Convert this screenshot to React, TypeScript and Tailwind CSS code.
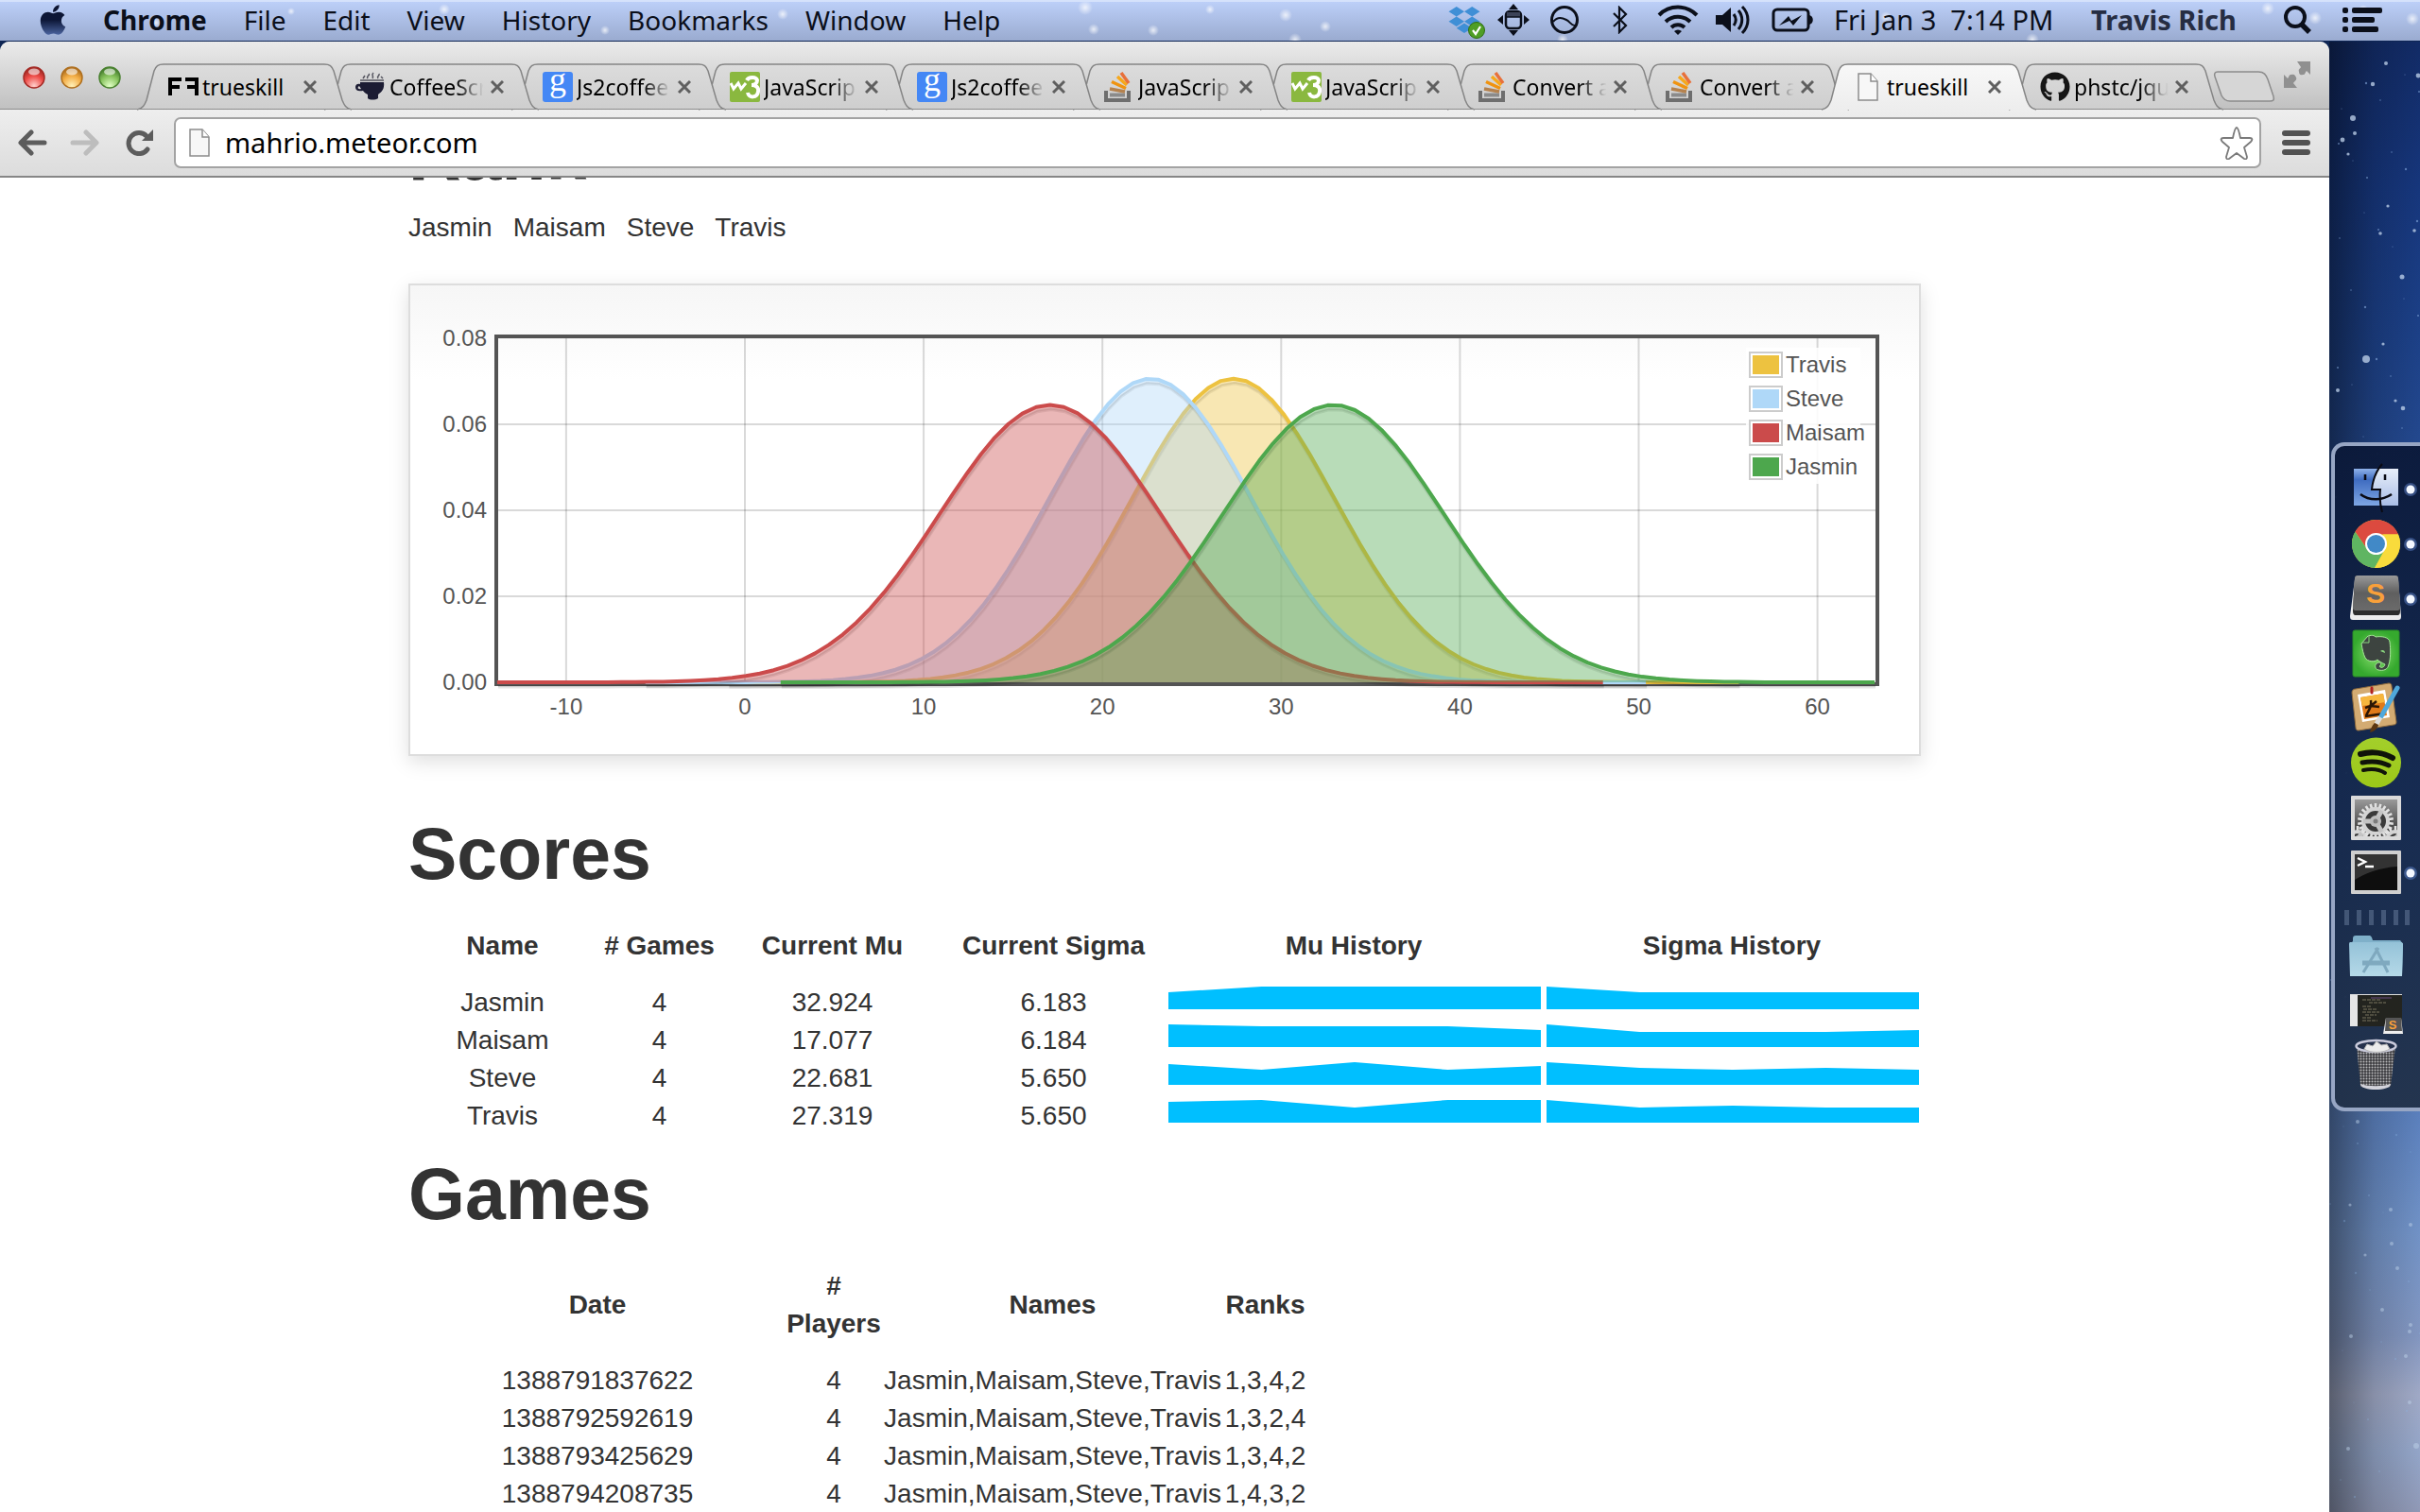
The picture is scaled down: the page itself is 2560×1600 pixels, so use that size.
import React from "react";
import { FaApple, FaDropbox, FaGithub } from "react-icons/fa";

/* ---------- Menu bar ---------- */

const MENUS = ["File", "Edit", "View", "History", "Bookmarks", "Window", "Help"];

const GLINTS = [
  [165, 22, 5], [308, 10, 4], [470, 8, 6], [640, 30, 5], [745, 18, 5], [828, 13, 6], [1148, 6, 8], [1280, 8, 5],
  [1157, 29, 6], [1220, 30, 6], [1360, 14, 7], [1402, 26, 6], [1370, 40, 7], [1653, 40, 6], [1995, 16, 6],
  [2150, 40, 7], [2399, 7, 7], [2449, 17, 7], [2500, 8, 5], [2552, 18, 7],
];

function MenuBar() {
  return (
    <header className="relative z-10 flex h-[43px] shrink-0 items-center overflow-hidden border-t-2 border-[#d5e2fb] bg-linear-to-b from-[#bccff8] to-[#9aabd0] pr-10 pb-[3px] pl-10 text-[28px] leading-9 text-[#0b0f1a]">
      <svg className="absolute inset-0 h-full w-full" aria-hidden="true">
        <defs>
          <radialGradient id="glint">
            <stop offset="0" stopColor="#fff" stopOpacity="0.75" />
            <stop offset="1" stopColor="#fff" stopOpacity="0" />
          </radialGradient>
        </defs>
        {GLINTS.map(([x, y, r]) => (
          <circle key={x} cx={x} cy={y} r={r} fill="url(#glint)" />
        ))}
      </svg>
      <button aria-label="Apple menu" className="relative w-[69px] shrink-0">
        <svg width="0" height="0" className="absolute">
          <defs>
            <linearGradient id="appleFill" x1="0" y1="0" x2="0" y2="1">
              <stop offset="0" stopColor="#0c1430" />
              <stop offset="0.5" stopColor="#0c1636" />
              <stop offset="1" stopColor="#4a639e" />
            </linearGradient>
          </defs>
        </svg>
        <FaApple className="h-9 w-8" style={{ fill: "url(#appleFill)" }} />
      </button>
      <nav className="relative flex flex-1 gap-[39px] whitespace-nowrap">
        <button className="font-bold">Chrome</button>
        {MENUS.map((m) => (
          <button key={m}>{m}</button>
        ))}
      </nav>
      <div className="relative flex items-center whitespace-nowrap">
        <button aria-label="Dropbox" className="flex w-[52px] justify-center">
          <span className="relative">
            <FaDropbox className="h-8 w-9 text-[#3f8fd6]" />
            <svg className="absolute -right-1 -bottom-1" width="18" height="18" viewBox="0 0 18 18">
              <circle cx="9" cy="9" r="8.5" fill="#4f9e25" stroke="#2f6f12" />
              <path d="M5 9l3 4 5-8" fill="none" stroke="#fff" strokeWidth="2.2" />
            </svg>
          </span>
        </button>
        <button aria-label="Window manager" className="flex w-[51px] justify-center">
          <svg width="34" height="34" viewBox="0 0 34 34" fill="#0b0f1a">
            <path d="M17 0l5 6H12zM17 34l5-6H12zM0 17l6-5v10zM34 17l-6-5v10z" />
            <rect x="9" y="8" width="16" height="18" rx="4" fill="none" stroke="#0b0f1a" strokeWidth="2.5" />
            <path d="M10 9h14v5H10z" fill="#3b4257" />
            <path d="M9 14h16" stroke="#0b0f1a" strokeWidth="1.5" />
          </svg>
        </button>
        <button aria-label="Activity" className="flex w-[58px] justify-center">
          <svg width="32" height="32" viewBox="0 0 32 32" fill="none" stroke="#0b0f1a" strokeWidth="3">
            <circle cx="16" cy="16" r="13.5" />
            <path d="M4 18c5-6 10-4 14-2s5 6 9 6" strokeWidth="2" />
          </svg>
        </button>
        <button aria-label="Bluetooth" className="flex w-[60px] justify-center">
          <svg width="18" height="30" viewBox="0 0 18 30" fill="none" stroke="#0b0f1a" strokeWidth="2.2">
            <path d="M2 8l13 13-7 7V2l7 7L2 22" />
          </svg>
        </button>
        <button aria-label="Wi-Fi" className="flex w-[62px] justify-center">
          <svg width="44" height="32" viewBox="0 0 44 32" fill="none" stroke="#0b0f1a" strokeWidth="4">
            <path d="M2 11a28 28 0 0 1 40 0" />
            <path d="M9 18a19 19 0 0 1 26 0" />
            <path d="M15 24a10 10 0 0 1 14 0" />
            <path d="M22 32l-4-4a6 6 0 0 1 8 0z" fill="#0b0f1a" stroke="none" />
          </svg>
        </button>
        <button aria-label="Volume" className="flex w-[54px] justify-center">
          <svg width="36" height="32" viewBox="0 0 36 32" fill="none" stroke="#0b0f1a" strokeWidth="3">
            <path d="M0 11h7l9-8v26l-9-8H0z" fill="#0b0f1a" stroke="none" />
            <path d="M19 10c3 4 3 8 0 12M24 6c5 6 5 14 0 20M28 2c8 8 8 20 0 28" />
          </svg>
        </button>
        <button aria-label="Battery charging" className="flex w-[72px] justify-center">
          <svg width="44" height="28" viewBox="0 0 44 28">
            <rect x="2" y="3" width="37" height="22" rx="4" fill="none" stroke="#0b0f1a" strokeWidth="3" />
            <path d="M40 9c5 1 5 9 0 10z" fill="#0b0f1a" />
            <path d="M8 20l10-10 3 5 11-6-9 11-4-5z" fill="#0b0f1a" />
          </svg>
        </button>
        <button className="ml-2 w-[240px] text-left text-[29px] whitespace-pre">Fri Jan 3  7:14 PM</button>
        <button className="ml-8 w-[160px] text-left text-[29px] font-bold text-[#262d42]">Travis Rich</button>
        <button aria-label="Spotlight" className="ml-11">
          <svg width="30" height="30" viewBox="0 0 30 30" fill="none" stroke="#0b0f1a">
            <circle cx="12" cy="12" r="10" strokeWidth="4" />
            <path d="M19 20l8 8" strokeWidth="5.5" />
          </svg>
        </button>
        <button aria-label="Notification Center" className="ml-8">
          <svg width="42" height="26" viewBox="0 0 42 26" fill="#0b0f1a">
            {[0, 10, 20].map((y, i) => (
              <g key={y}>
                <rect x="0" y={y} width="6" height="6" rx="2" />
                <rect x="10" y={y} width={[32, 24, 28][i]} height="6" rx="2" />
              </g>
            ))}
          </svg>
        </button>
      </div>
    </header>
  );
}

/* ---------- Tab strip ---------- */

function PageIcon({ small = false }: { small?: boolean }) {
  return (
    <svg width={small ? 32 : 22} height="32" viewBox={small ? "0 0 32 32" : "5 0 22 32"} aria-hidden="true">
      <path d="M6 2h13l7 8v20H6z" fill="#f7f7f7" stroke="#8c8c8c" strokeWidth="1.5" />
      <path d="M19 2v8h7" fill="#fff" stroke="#8c8c8c" strokeWidth="1.5" />
    </svg>
  );
}

function Favicon({ kind }: { kind: string }) {
  switch (kind) {
    case "ff":
      return (
        <svg width="32" height="32" viewBox="0 0 32 32">
          <path d="M0 6h14v4H4v4h8v4H4v7H0zM32 6H18v4h10v4h-8v4h8v7h4z" fill="#000" />
        </svg>
      );
    case "coffee":
      return (
        <svg width="32" height="32" viewBox="0 0 32 32">
          <path d="M5 11h25c1 7-2 10-6 13v4c-3 2-9 2-11 0v-4c-3-1-4-3-5-4-5 1-8 0-8-4 0-3 3-4 5-3zM4 15c-2 1-2 4 2 3z" fill="#1c1c33" fillRule="evenodd" />
          <path d="M5 9h25M8 7l2-3M13 7c-2-3 3-3 1-5M18 7c2-3-2-3 1-6M24 7c-2-3 2-2 1-5M29 7l-2-2" fill="none" stroke="#55555f" strokeWidth="1.5" />
        </svg>
      );
    case "google":
      return (
        <svg width="32" height="32" viewBox="0 0 32 32">
          <rect width="32" height="32" rx="3" fill="#4487f5" />
          <text x="16" y="20" textAnchor="middle" fontSize="36" fill="#fff" fontFamily="Liberation Serif, serif">g</text>
        </svg>
      );
    case "w3":
      return (
        <svg width="32" height="32" viewBox="0 0 32 32">
          <rect width="32" height="32" rx="2" fill="#8ab83f" />
          <path d="M1 12l3 6 5-6 3 6 5-6" fill="none" stroke="#fff" strokeWidth="3" />
          <path d="M18 9c2-4 10-4 11 0 0 3-3 5-6 5 4 0 8 2 7 7-1 7-10 7-11 1" fill="none" stroke="#fff" strokeWidth="4" />
        </svg>
      );
    case "so":
      return (
        <svg width="32" height="32" viewBox="0 0 32 32" fill="none">
          <path d="M2 20v10h24V20" stroke="#6e6e6e" strokeWidth="4" />
          <path d="M6 24.500h16" stroke="#8b8b8b" strokeWidth="4" />
          <path d="M6 18l16 3" stroke="#b5824e" strokeWidth="3.5" />
          <path d="M8 10.500l15 7" stroke="#f0930f" strokeWidth="3.5" />
          <path d="M14 5l10 9" stroke="#f7a81b" strokeWidth="3.5" />
          <path d="M18 1l8 11" stroke="#e8703a" strokeWidth="3.5" />
        </svg>
      );
    case "github":
      return <FaGithub className="h-8 w-8 text-[#161616]" />;
    default:
      return <PageIcon small />;
  }
}

const TABS = [
  { icon: "ff", title: "trueskill" },
  { icon: "coffee", title: "CoffeeScr" },
  { icon: "google", title: "Js2coffee" },
  { icon: "w3", title: "JavaScrip" },
  { icon: "google", title: "Js2coffee" },
  { icon: "so", title: "JavaScrip" },
  { icon: "w3", title: "JavaScrip" },
  { icon: "so", title: "Convert a" },
  { icon: "so", title: "Convert a" },
  { icon: "page", title: "trueskill", active: true },
  { icon: "github", title: "phstc/jqu" },
];

const TAB_EDGE = "M0 49C6 48 8 44 10 39L18 8C20 3 22 1 28 1H198C204 1 206 3 208 8L217 39C219 44 221 48 227 49";

function Tab({ tab, order }: { tab: (typeof TABS)[number]; order: number }) {
  return (
    <li className="relative flex h-[49px] w-[198px] shrink items-center pl-[33px]" style={{ zIndex: tab.active ? 30 : 20 - order }}>
      <svg className="absolute bottom-0 left-0 overflow-visible" width="228" height="49" viewBox="0 0 228 49" aria-hidden="true">
        <path d={`${TAB_EDGE}Z`} fill={tab.active ? "url(#tabActive)" : "url(#tabIdle)"} />
        <path d={TAB_EDGE} fill="none" stroke="#858585" strokeWidth="1.5" />
        {!tab.active && <path d="M0 48.500H227" stroke="#8c8c8c" />}
      </svg>
      <button role="tab" aria-selected={!!tab.active} className="relative flex shrink-0 items-center text-left">
        <Favicon kind={tab.icon} />
        <span
          className={
            "ml-1 w-[106px] text-[23px] leading-8 whitespace-pre text-black " +
            (tab.title === "trueskill" ? "" : "[mask-image:linear-gradient(to_right,black_66%,transparent_94%)]")
          }
        >
          {tab.title}
        </span>
      </button>
      <button aria-label={`Close ${tab.title}`} className="relative ml-px shrink-0">
        <svg width="14" height="14" viewBox="0 0 14 14" stroke="#5f5f5f" strokeWidth="3">
          <path d="M1 1l12 12M13 1L1 13" />
        </svg>
      </button>
    </li>
  );
}

const LIGHTS = [
  { id: "close", label: "Close window", edge: "#a52a25", mid: "#ee4b47", glow: "#ffd0cc" },
  { id: "min", label: "Minimize window", edge: "#b0701f", mid: "#f3ad45", glow: "#fff0b8" },
  { id: "zoom", label: "Zoom window", edge: "#4a8230", mid: "#86c25c", glow: "#e0ffc4" },
];

function TabStrip() {
  return (
    <div className="relative flex h-[72px] shrink-0 bg-linear-to-b from-[#ebebeb] to-[#c0c0c0] pt-[23px]">
      <svg width="0" height="0" className="absolute">
        <defs>
          <linearGradient id="tabActive" x1="0" y1="0" x2="0" y2="1">
            <stop offset="0" stopColor="#f8f8f8" />
            <stop offset="1" stopColor="#ededed" />
          </linearGradient>
          <linearGradient id="tabIdle" x1="0" y1="0" x2="0" y2="1">
            <stop offset="0" stopColor="#dcdcdc" />
            <stop offset="1" stopColor="#cecece" />
          </linearGradient>
        </defs>
      </svg>
      <div className="absolute inset-x-0 bottom-0 h-px bg-[#8c8c8c]" />
      <div className="relative flex w-[145px] shrink-0 items-start gap-4 pt-[3px] pl-6">
        {LIGHTS.map((l) => (
          <button key={l.id} aria-label={l.label}>
            <svg width="24" height="24" viewBox="0 0 24 24">
              <defs>
                <radialGradient id={l.id} cx="0.5" cy="0.9" r="0.8">
                  <stop offset="0" stopColor={l.glow} />
                  <stop offset="0.6" stopColor={l.mid} />
                  <stop offset="1" stopColor={l.edge} />
                </radialGradient>
              </defs>
              <circle cx="12" cy="12" r="11" fill={`url(#${l.id})`} stroke={l.edge} strokeWidth="1.5" />
              <ellipse cx="12" cy="6" rx="6" ry="3.5" fill="#fff" opacity="0.6" />
            </svg>
          </button>
        ))}
      </div>
      <ul role="tablist" className="relative flex min-w-0">
        {TABS.map((t, i) => (
          <Tab key={i} tab={t} order={i} />
        ))}
      </ul>
      <button aria-label="New tab" className="relative mt-2 ml-[18px] h-8 shrink-0">
        <svg width="66" height="34" viewBox="0 0 66 34">
          <path d="M5 1H48C54 1 56 4 58 9L64 27C65 31 64 32 60 32H18C13 32 11 30 9 26L2 6C1 3 2 1 5 1Z" fill="#d6d6d6" stroke="#8c8c8c" strokeWidth="1.5" />
        </svg>
      </button>
      <button aria-label="Full screen" className="relative -mt-0.5 mr-5 ml-auto h-7 shrink-0">
        <svg width="28" height="28" viewBox="0 0 28 28" fill="#909090">
          <path d="M14 0h14v14l-4-4c-2 2-1 4-4 4-3 1-4-1-4-3-1-3 1-3 2-5z" />
          <path d="M14 28H0V14l4 4c2-2 1-4 4-4 3-1 4 1 5 3 1 3-1 3-3 6z" />
        </svg>
      </button>
    </div>
  );
}

/* ---------- Toolbar ---------- */

function Toolbar() {
  return (
    <div className="flex h-[72px] shrink-0 items-center border-b-2 border-[#868686] bg-linear-to-b from-[#eeeeee] to-[#dcdcdc] pr-5 pl-[18px]">
      <button aria-label="Back">
        <svg width="32" height="28" viewBox="0 0 32 28" fill="none" stroke="#5c5c5c" strokeWidth="5" strokeLinecap="round" strokeLinejoin="round">
          <path d="M15 3L4 14l11 11M5 14h24" />
        </svg>
      </button>
      <button aria-label="Forward" className="ml-6" disabled>
        <svg width="32" height="28" viewBox="0 0 32 28" fill="none" stroke="#bdbdbd" strokeWidth="5" strokeLinecap="round" strokeLinejoin="round">
          <path d="M17 3l11 11-11 11M27 14H3" />
        </svg>
      </button>
      <button aria-label="Reload" className="ml-[27px]">
        <svg width="30" height="28" viewBox="0 0 30 28">
          <path d="M23 21A11 11 0 1 1 22 7" fill="none" stroke="#5c5c5c" strokeWidth="5" strokeLinecap="round" />
          <path d="M29 0v12H17z" fill="#5c5c5c" />
        </svg>
      </button>
      <form className="ml-[21px] flex h-[54px] min-w-0 flex-1 items-center rounded-[7px] border-2 border-[#a3a3a3] bg-white pr-1.5 pl-[14px]" onSubmit={(e) => e.preventDefault()}>
        <PageIcon />
        <input
          aria-label="Address"
          className="ml-4 min-w-0 flex-1 bg-transparent text-[29px] leading-9 text-black outline-none"
          defaultValue="mahrio.meteor.com"
        />
        <button aria-label="Bookmark this page" type="button">
          <svg width="36" height="36" viewBox="0 0 36 36" fill="#fff" stroke="#7a7a7a" strokeWidth="1.8" strokeLinejoin="round">
            <path d="M18 2c1 0 2 1 4 11h10c3 0 3 2 1 4l-7 6 3 10c0 2-1 3-3 2l-8-6-8 6c-2 1-3 0-3-2l3-10-7-6c-2-2-2-4 1-4h10c2-10 3-11 4-11z" />
          </svg>
        </button>
      </form>
      <button aria-label="Chrome menu" className="ml-[22px]">
        <svg width="30" height="26" viewBox="0 0 30 26" fill="#525252">
          <rect y="0" width="30" height="6" rx="3" />
          <rect y="10" width="30" height="6" rx="3" />
          <rect y="20" width="30" height="6" rx="3" />
        </svg>
      </button>
    </div>
  );
}

/* ---------- Distribution chart ---------- */

const SERIES = [
  { name: "Travis", mu: 27.319, sigma: 5.65, from: -0.93, to: 55.6, color: "#edc240" },
  { name: "Steve", mu: 22.681, sigma: 5.65, from: -5.57, to: 50.4, color: "#afd8f8" },
  { name: "Maisam", mu: 17.077, sigma: 6.184, from: -13.86, to: 48, color: "#cb4b4b" },
  { name: "Jasmin", mu: 32.924, sigma: 6.183, from: 2, to: 63.2, color: "#4da74d" },
];

const BASE = 420;
const px = (x: number) => 354 + 18.91 * x;
const py = (y: number) => BASE - 4550 * y;

function curve(s: (typeof SERIES)[number]) {
  const pts: string[] = [];
  const steps = 80;
  for (let i = 0; i <= steps; i++) {
    const x = s.from + ((s.to - s.from) * i) / steps;
    const d = Math.exp(-((x - s.mu) ** 2) / (2 * s.sigma ** 2)) / (s.sigma * Math.sqrt(2 * Math.PI));
    pts.push(`${px(x).toFixed(1)} ${py(d).toFixed(1)}`);
  }
  return `M${pts.join("L")}`;
}

function Chart() {
  return (
    <figure className="mt-[39px] border-2 border-[#dddddd] bg-[linear-gradient(#f6f6f6_0,#ffffff_100px)] shadow-[0_6px_20px_rgba(0,0,0,0.13)]">
      <svg className="block h-auto w-full" viewBox="0 0 1596 496" fontSize="24" fill="#545454" role="img" aria-label="Skill distributions">
        <g stroke="#000" strokeOpacity="0.15" strokeWidth="2">
          {[-10, 0, 10, 20, 30, 40, 50, 60].map((x) => (
            <path key={x} d={`M${px(x)} 56V${BASE}`} />
          ))}
          {[0.02, 0.04, 0.06].map((y) => (
            <path key={y} d={`M93 ${py(y)}H1550`} />
          ))}
        </g>
        <rect x="91" y="54" width="1461" height="368" fill="none" stroke="#545454" strokeWidth="4" />
        {SERIES.map((s) => {
          const d = curve(s);
          return (
            <g key={s.name} fill="none">
              <path d={d} transform="translate(1 5)" stroke="#000" strokeOpacity="0.1" strokeWidth="3" />
              <path d={d} transform="translate(1 4)" stroke="#000" strokeOpacity="0.1" strokeWidth="2" />
              <path d={`${d}V${BASE}H${px(s.from)}Z`} fill={s.color} fillOpacity="0.4" />
              <path d={d} stroke={s.color} strokeWidth="4" strokeLinejoin="round" />
            </g>
          );
        })}
        <g textAnchor="middle">
          {[-10, 0, 10, 20, 30, 40, 50, 60].map((x) => (
            <text key={x} x={px(x)} y="454">{x}</text>
          ))}
        </g>
        <g textAnchor="end">
          {["0.08", "0.06", "0.04", "0.02", "0.00"].map((t, i) => (
            <text key={t} x="81" y={64 + i * 91}>{t}</text>
          ))}
        </g>
        <rect x="1413" y="66" width="121" height="144" fill="#fff" fillOpacity="0.85" />
        {SERIES.map((s, i) => (
          <g key={s.name}>
            <rect x="1417" y={71 + i * 36} width="34" height="26" fill="#fff" stroke="#cccccc" strokeWidth="2" />
            <rect x="1420" y={74 + i * 36} width="28" height="20" fill={s.color} />
            <text x="1455" y={92 + i * 36}>{s.name}</text>
          </g>
        ))}
      </svg>
    </figure>
  );
}

/* ---------- Tables ---------- */

const SCORES = [
  { name: "Jasmin", games: 4, mu: "32.924", sigma: "6.183", muH: [6, 0, 0, 0, 0], sigmaH: [0, 6, 6, 6, 6] },
  { name: "Maisam", games: 4, mu: "17.077", sigma: "6.184", muH: [0, 2, 2, 2, 6], sigmaH: [0, 8, 8, 8, 6] },
  { name: "Steve", games: 4, mu: "22.681", sigma: "5.650", muH: [2, 8, 0, 8, 4], sigmaH: [0, 6, 8, 6, 8] },
  { name: "Travis", games: 4, mu: "27.319", sigma: "5.650", muH: [2, 0, 8, 0, 0], sigmaH: [0, 8, 6, 8, 8] },
];

const GAMES = [
  ["1388791837622", "4", "Jasmin,Maisam,Steve,Travis", "1,3,4,2"],
  ["1388792592619", "4", "Jasmin,Maisam,Steve,Travis", "1,3,2,4"],
  ["1388793425629", "4", "Jasmin,Maisam,Steve,Travis", "1,3,4,2"],
  ["1388794208735", "4", "Jasmin,Maisam,Steve,Travis", "1,4,3,2"],
];

function Spark({ values }: { values: number[] }) {
  const top = values.map((v, i) => `${i * 25},${v}`).join(" ");
  return (
    <svg className="block h-6 w-full" viewBox="0 0 100 24" preserveAspectRatio="none" aria-hidden="true">
      <polygon points={`0,24 ${top} 100,24`} fill="#00bfff" />
    </svg>
  );
}

function ScoresTable() {
  return (
    <table className="w-full table-fixed text-center">
      <colgroup>
        <col className="w-[199px]" />
        <col className="w-[133px]" />
        <col className="w-[233px]" />
        <col className="w-[235px]" />
        <col className="w-[400px]" />
        <col className="w-[400px]" />
      </colgroup>
      <thead>
        <tr>
          {["Name", "# Games", "Current Mu", "Current Sigma", "Mu History", "Sigma History"].map((h) => (
            <th key={h} scope="col" className="pb-5 whitespace-nowrap">{h}</th>
          ))}
        </tr>
      </thead>
      <tbody>
        {SCORES.map((r) => (
          <tr key={r.name}>
            <td>{r.name}</td>
            <td>{r.games}</td>
            <td>{r.mu}</td>
            <td>{r.sigma}</td>
            <td className="pt-[3px] pr-0.5 pl-1 align-top"><Spark values={r.muH} /></td>
            <td className="pt-[3px] pr-0.5 pl-1 align-top"><Spark values={r.sigmaH} /></td>
          </tr>
        ))}
      </tbody>
    </table>
  );
}

function GamesTable() {
  return (
    <table className="w-[950px] table-fixed text-center whitespace-nowrap">
      <colgroup>
        <col className="w-[400px]" />
        <col className="w-[100px]" />
        <col className="w-[363px]" />
        <col className="w-[87px]" />
      </colgroup>
      <thead>
        <tr>
          <th scope="col" className="pb-5">Date</th>
          <th scope="col" className="pb-5 whitespace-normal"># Players</th>
          <th scope="col" className="pb-5">Names</th>
          <th scope="col" className="pb-5">Ranks</th>
        </tr>
      </thead>
      <tbody>
        {GAMES.map((g) => (
          <tr key={g[0]}>
            {g.map((c, i) => (
              <td key={i}>{c}</td>
            ))}
          </tr>
        ))}
      </tbody>
    </table>
  );
}

function Page() {
  return (
    <main className="min-h-0 flex-1 overflow-hidden bg-white font-['Liberation_Sans',Arial,sans-serif] text-[28px] leading-10 text-[#333333]">
      <div className="mx-auto -mt-[65px] max-w-[1600px]">
        <h1 className="text-[77px] leading-20 font-bold">Rank</h1>
        <ul className="mt-[18px] flex gap-[22px]">
          {["Jasmin", "Maisam", "Steve", "Travis"].map((n) => (
            <li key={n}>{n}</li>
          ))}
        </ul>
        <Chart />
        <h1 className="mt-[63px] text-[77px] leading-20 font-bold">Scores</h1>
        <div className="mt-[38px]">
          <ScoresTable />
        </div>
        <h1 className="mt-[22px] text-[77px] leading-20 font-bold">Games</h1>
        <div className="mt-[38px]">
          <GamesTable />
        </div>
      </div>
    </main>
  );
}

/* ---------- Dock ---------- */

function Gear({ cx, cy, r, teeth }: { cx: number; cy: number; r: number; teeth: number }) {
  return (
    <g transform={`translate(${cx} ${cy})`}>
      {Array.from({ length: teeth }, (_, i) => (
        <rect key={i} x="-1.3" y={-r - 4} width="2.6" height="5" fill="#e2e2e2" transform={`rotate(${(360 / teeth) * i})`} />
      ))}
      <circle r={r - 2} fill="#3a3a3a" stroke="#d4d4d4" strokeWidth="4" />
      {[30, 150, 270].map((a) => (
        <rect key={a} x="-2.5" y={-r + 2} width="5" height={r - 4} fill="#c4c4c4" transform={`rotate(${a})`} />
      ))}
      <circle r={r / 3 + 1} fill="#bdbdbd" />
      <circle r={r / 6} fill="#7d7d7d" />
    </g>
  );
}

const DOCK: { label: string; running?: boolean; art: React.ReactNode }[] = [
  {
    label: "Finder",
    running: true,
    art: (
      <>
        <rect x="6" y="9" width="47" height="39" fill="url(#finderR)" />
        <path d="M6 9h27c-4 6-7 14-8 22h8c0 6 0 12 1 17H6z" fill="url(#finderL)" />
        <g fill="none" stroke="#0a0a12" strokeWidth="2">
          <path d="M36 4c-7 8-10 17-11 27h9c-1 9 0 17 2 24" />
          <path d="M13 36c9 7 23 7 33 0M18 15v6M39 15v6" strokeWidth="2.5" />
        </g>
      </>
    ),
  },
  {
    label: "Chrome",
    running: true,
    art: (
      <>
        <circle cx="29.5" cy="30.5" r="25.5" fill="#f7d633" />
        <path d="M7.400 17.700A25.500 25.500 0 0 1 53 20.500H29.500L20 36z" fill="#dc4a3f" />
        <path d="M7.400 17.700A25.500 25.500 0 0 0 28 56L39.500 36 20 36z" fill="#5fb562" />
        <path d="M53 20.500A25.500 25.500 0 0 1 28 56L39.500 35 37 20.500z" fill="#f9db3c" />
        <circle cx="29.5" cy="30.5" r="11.5" fill="#fff" />
        <circle cx="29.5" cy="30.5" r="9.5" fill="#4189c7" />
      </>
    ),
  },
  {
    label: "Sublime Text",
    running: true,
    art: (
      <>
        <path d="M7 10h46l3 39c0 3-1 4-3 4H5c-2 0-3-1-3-4z" fill="#ececec" />
        <path d="M10 6h40c2 0 3 1 3 3l2 34c0 4-1 5-3 5H8c-2 0-3-1-3-5L7 9c0-2 1-3 3-3z" fill="#2c2c2c" />
        <path d="M10 6h40c2 0 3 1 3 3l2 30c0 3-1 4-3 4H8c-2 0-3-1-3-4L7 9c0-2 1-3 3-3z" fill="url(#steel)" />
        <text x="29" y="35" textAnchor="middle" fontSize="30" fontWeight="bold" fill="#f9a03a" fontFamily="Liberation Sans, sans-serif">S</text>
      </>
    ),
  },
  {
    label: "Evernote",
    art: (
      <>
        <rect x="5" y="6" width="49" height="49" rx="2" fill="url(#ever)" stroke="#2a8c26" />
        <path
          d="M14 20l7-8c0 0 6-2 8 1 6-1 14 0 15 5 1 9 1 18-1 24-1 6-6 7-11 6-5-1-4-8 1-8 2 0 2 3 0 4 1 2 5 2 6-2-4-2-6-3-8-5-3 3-11 2-13-2-2-4-3-9-4-15z"
          fill="#3d4440"
          stroke="#a5e698"
        />
        <path d="M15 19h7v-7" fill="none" stroke="#8bd97f" />
        <path d="M34 28c2-2 5-1 5 2z" fill="#8bd97f" />
      </>
    ),
  },
  {
    label: "Pixelmator",
    art: (
      <>
        <path d="M8 10l35-6c2 0 3 1 3 3l5 38c0 2-1 3-3 3L11 54c-2 0-3-1-3-3L4 14c0-2 1-4 4-4z" fill="#d3ab72" stroke="#8d6a3d" />
        <path d="M10 16l29-5 5 29-29 5z" fill="#fff" />
        <path d="M13 19l24-4 4 23-24 4z" fill="#e07a1a" />
        <path d="M13 19l24-4 2 9-24 4z" fill="#f6b63d" />
        <path d="M19 38c4-7 6-11 5-16m0 6l-6 2m6-2l9 1m-9-1l6-5M18 39l20-3" fill="none" stroke="#2b1605" strokeWidth="2.5" />
        <path d="M25 9v5" stroke="#b22222" strokeWidth="3" strokeLinecap="round" />
        <path d="M52 9L35 39" stroke="#4fa8dc" strokeWidth="5" strokeLinecap="round" />
        <path d="M34 40l-4 7" stroke="#dddddd" strokeWidth="5" />
        <path d="M32 48c-1 4-4 7-9 8 1-4 2-7 5-10z" fill="#5b3612" />
      </>
    ),
  },
  {
    label: "Spotify",
    art: (
      <>
        <circle cx="29.5" cy="30" r="26.5" fill="url(#spot)" />
        <g fill="none" stroke="#10140a" strokeLinecap="round">
          <path d="M13 21c11-3 24-2 34 4" strokeWidth="6" />
          <path d="M15 30c10-2 20-1 28 3" strokeWidth="5" />
          <path d="M16 38c9-2 17-1 23 3" strokeWidth="4" />
        </g>
      </>
    ),
  },
  {
    label: "System Preferences",
    art: (
      <>
        <rect x="3" y="7" width="53" height="47" rx="1" fill="#dadada" />
        <rect x="7" y="11" width="45" height="39" fill="url(#grille)" />
        <svg x="7" y="11" width="45" height="39" viewBox="7 11 45 39">
          <Gear cx={10} cy={54} r={11} teeth={14} />
          <Gear cx={50} cy={54} r={11} teeth={14} />
          <Gear cx={29} cy={34} r={15} teeth={22} />
        </svg>
      </>
    ),
  },
  {
    label: "Terminal",
    running: true,
    art: (
      <>
        <rect x="3" y="7" width="53" height="46" rx="1" fill="#cfcfcf" />
        <rect x="7" y="11" width="45" height="38" fill="#0e0e0e" />
        <path d="M7 11h45v13C34 25 18 31 7 38z" fill="#333" />
        <path d="M10 15l8 4-8 4M18 24h9" fill="none" stroke="#fff" strokeWidth="2.5" />
      </>
    ),
  },
];

const DOCK_END: { label: string; art: React.ReactNode }[] = [
  {
    label: "Applications",
    art: (
      <>
        <path d="M2 14l3-3V8c0-2 1-3 3-3h14c2 0 3 1 4 5h29l3 4-1 34H2z" fill="#7fb0c9" />
        <path d="M1 14c0-2 1-2 2-2h53c1 0 2 1 2 2l-1 34H2z" fill="url(#folder)" />
        <g fill="none" stroke="#7fa9bf" strokeWidth="3">
          <path d="M29 18l13 26M32 18L16 44" />
          <path d="M15 34h29" strokeWidth="5" />
        </g>
      </>
    ),
  },
  {
    label: "Minimized window",
    art: (
      <>
        <rect x="2" y="9" width="55" height="34" fill="#23241f" />
        <rect x="2" y="9" width="8" height="34" fill="#e6e6e6" />
        <rect x="2" y="9" width="55" height="1" fill="#ddd" />
        <g stroke="#7a7560" strokeWidth="1">
          <path d="M15 15h20M22 18h18M15 22h9M16 25h14M15 28h18M18 31h12M15 34h10M15 37h16" strokeDasharray="4 1" />
          <path d="M24 13h22" stroke="#6a4a80" />
        </g>
        <path d="M40 34h16l2 17H37z" fill="#eee" />
        <path d="M40 34h16l1 14H39z" fill="#555" />
        <text x="47" y="46" textAnchor="middle" fontSize="13" fontWeight="bold" fill="#f9a03a" fontFamily="Liberation Sans, sans-serif">S</text>
      </>
    ),
  },
  {
    label: "Trash",
    art: (
      <>
        <path d="M9 6h41l-5 42c-1 4-31 4-32 0z" fill="url(#mesh)" />
        <path d="M13 46c0 8 32 8 32 0-8 3-24 3-32 0z" fill="#d2d2da" />
        <ellipse cx="29.5" cy="6" rx="21" ry="6" fill="#26324c" stroke="#c9cadb" strokeWidth="2.5" />
        <path d="M17 9l3-5 6 2 4-5 5 4 6-1 3 5c-6 4-20 5-27 0z" fill="#ececec" stroke="#b5b5b5" />
      </>
    ),
  },
];

function DockItem({ label, running, art }: { label: string; running?: boolean; art: React.ReactNode }) {
  return (
    <li>
      <button aria-label={label} className="block">
        <svg className="block overflow-visible" width="76" height="58" viewBox="0 0 76 58">
          {art}
          {running && (
            <>
              <circle cx="66" cy="31" r="7" fill="#7fa8ff" opacity="0.35" />
              <circle cx="66" cy="31" r="4.5" fill="#f4f8ff" />
            </>
          )}
        </svg>
      </button>
    </li>
  );
}

function Dock() {
  return (
    <nav aria-label="Dock" className="relative w-full rounded-l-[14px] border-4 border-r-0 border-[#97a6c4] bg-linear-to-b from-[#0b1939]/95 via-[#14284d]/95 to-[#213149]/95 pt-[15px] pb-[13px] pl-[14px]">
      <svg width="0" height="0" className="absolute">
        <defs>
          <linearGradient id="finderL" x1="0" y1="0" x2="0" y2="1"><stop offset="0" stopColor="#8fb2ea" /><stop offset="0.3" stopColor="#3f6cc0" /><stop offset="1" stopColor="#7ea6e4" /></linearGradient>
          <linearGradient id="finderR" x1="0" y1="0" x2="0" y2="1"><stop offset="0" stopColor="#e8effa" /><stop offset="1" stopColor="#a9bde6" /></linearGradient>
          <linearGradient id="steel" x1="0" y1="0" x2="0" y2="1"><stop offset="0" stopColor="#9a9a9a" /><stop offset="0.5" stopColor="#5f5f5f" /><stop offset="1" stopColor="#6b6b6b" /></linearGradient>
          <radialGradient id="ever"><stop offset="0" stopColor="#8be06f" /><stop offset="1" stopColor="#35a92e" /></radialGradient>
          <linearGradient id="spot" x1="0" y1="0" x2="0" y2="1"><stop offset="0" stopColor="#a3cf2b" /><stop offset="1" stopColor="#9cc818" /></linearGradient>
          <linearGradient id="folder" x1="0" y1="0" x2="0" y2="1"><stop offset="0" stopColor="#94c2d8" /><stop offset="1" stopColor="#b5d9e8" /></linearGradient>
          <linearGradient id="grille" x1="0" y1="0" x2="0" y2="1"><stop offset="0" stopColor="#9a9a9a" /><stop offset="1" stopColor="#2e2e2e" /></linearGradient>
          <pattern id="mesh" width="3" height="3" patternUnits="userSpaceOnUse"><rect width="3" height="3" fill="#3c3c40" /><circle cx="1.5" cy="1.5" r="1" fill="#b9b9bb" /></pattern>
        </defs>
      </svg>
      <ul>
        {DOCK.map((d) => (
          <DockItem key={d.label} {...d} />
        ))}
        <li className="h-[34px] pt-3" role="separator">
          <svg className="block overflow-visible" width="76" height="16" viewBox="0 0 76 16" fill="#8ea3c4" fillOpacity="0.35">
            {[-4, 9, 22, 35, 48, 60].map((x) => (
              <rect key={x} x={x} width="5" height="16" />
            ))}
          </svg>
        </li>
        {DOCK_END.map((d) => (
          <DockItem key={d.label} {...d} />
        ))}
      </ul>
    </nav>
  );
}

/* Starfield: hand-placed bright stars followed by a pseudo-random scatter. */
const BRIGHT = [
  [39, 336, 4], [77, 249, 2.5], [46, 45, 2.2], [60, 23, 2], [94, 36, 2.4], [25, 81, 3], [27, 97, 2], [14, 104, 2.4], [20, 119, 1.6],
  [54, 203, 1.8], [78, 388, 2.3], [70, 380, 1.6], [62, 174, 1.6], [57, 320, 1.6], [9, 369, 2], [90, 200, 1.8], [30, 1143, 2],
  [22, 1231, 1.6], [65, 1236, 2], [86, 1252, 2], [66, 1272, 2], [38, 1284, 1.6], [72, 1298, 2], [56, 1342, 2], [86, 1358, 2],
  [85, 1365, 2], [23, 1370, 2], [81, 1391, 2], [85, 1440, 2], [20, 1489, 2], [92, 1486, 3],
];
const SCATTER = Array.from({ length: 90 }, (_, i) => {
  const a = (i * 7919 + 13) % 97;
  const b = (i * 104729 + 71) % 1551;
  return [a, b, 0.6 + (i % 4) * 0.2];
});

function Starfield() {
  return (
    <svg className="absolute inset-0 h-full w-full" aria-hidden="true">
      {BRIGHT.map(([x, y, r], i) => (
        <circle key={i} cx={x} cy={y} r={r} fill="#c3d6ee" opacity={y > 1130 ? 0.45 : 0.75} />
      ))}
      {SCATTER.map(([x, y, r], i) => (
        <circle key={`s${i}`} cx={x} cy={y} r={r} fill="#8fb5e6" opacity={y > 1130 ? 0.3 : 0.55} />
      ))}
    </svg>
  );
}

export default function App() {
  return (
    <div className="flex h-screen flex-col overflow-hidden bg-[#0f2654] font-['Noto_Sans','Open_Sans',sans-serif]">
      <MenuBar />
      <div className="flex min-h-0 flex-1 pt-px">
        <section className="relative z-10 flex min-w-0 flex-1 flex-col overflow-hidden rounded-t-[10px] bg-white">
          <TabStrip />
          <Toolbar />
          <Page />
        </section>
        <aside className="relative flex w-24 shrink-0 items-center bg-[linear-gradient(#122b66_0%,#16367c_10%,#1c4087_20%,#24498f_28%,#3c63a8_55%,#5b80bd_73%,#7192c6_81%,#8296c0_88%,#a0a9c6_92%,#93a5c8_96%,#9099b6_100%)] pl-0.5">
          <div className="absolute inset-0 bg-linear-to-r from-black/45 via-black/15 to-transparent" />
          <Starfield />
          <Dock />
        </aside>
      </div>
    </div>
  );
}
